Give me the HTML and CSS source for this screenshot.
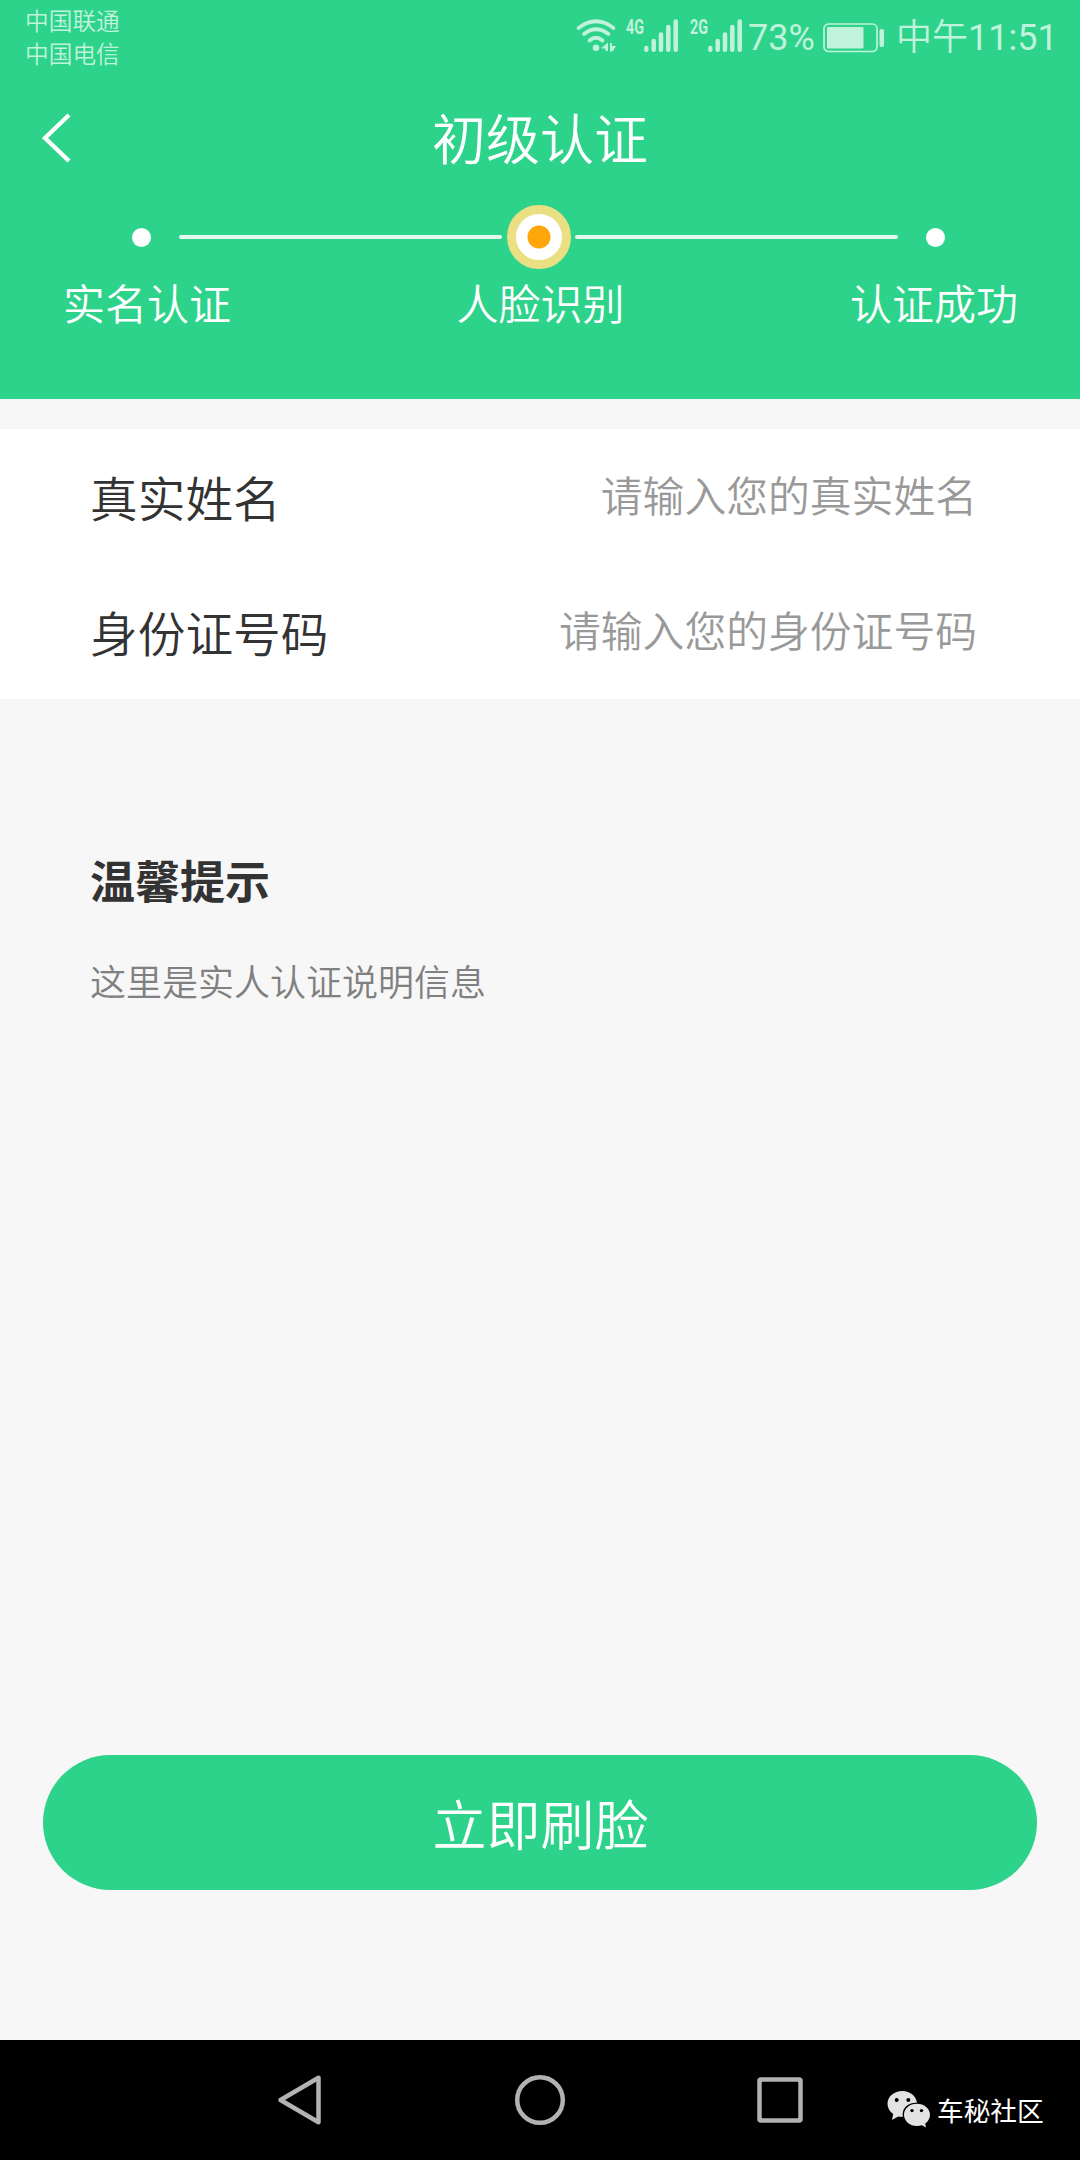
FILE: index.html
```html
<!DOCTYPE html>
<html lang="zh-CN">
<head>
<meta charset="utf-8">
<title>初级认证</title>
<link rel="stylesheet" href="styles.css">
</head>
<body>
<div class="app">
  <header class="header">
    <div class="status">
      <div class="carriers"><span>中国联通</span><span>中国电信</span></div>
      <div class="indicators">
        <svg class="signals" width="170" height="80" viewBox="575 0 170 80">
          <g fill="none" stroke="currentColor" stroke-width="3.7" stroke-linecap="round">
            <path d="M578.500 28Q596 14.500 613.500 28"/>
            <path d="M584 34Q596 24.500 608.500 34"/>
            <path d="M589.500 40.500Q596 35 602.500 40.500"/>
          </g>
          <circle cx="596" cy="47.700" r="3.300"/>
          <path d="M602 47.500L608 42.500V51H605.500V48.500H602ZM610 43H612V46H616L612.500 51.500H610Z"/>
          <g fill="none" stroke="currentColor" stroke-width="4.500" stroke-linecap="round">
            <path d="M646.300 48V49.700M653.700 41V49.700M661 34.500V49.700M668.300 27V49.700M675.700 21.500V49.700"/>
            <path d="M710.300 48V49.700M717.700 41V49.700M725 34.500V49.700M732.300 27V49.700M739.700 21.500V49.700"/>
          </g>
          <text class="net" x="626" y="34" textLength="18" lengthAdjust="spacingAndGlyphs">4G</text>
          <text class="net" x="690" y="34" textLength="18" lengthAdjust="spacingAndGlyphs">2G</text>
        </svg>
        <span class="percent">73%</span>
        <svg class="battery" width="62" height="30" viewBox="0 0 62 30">
          <rect x="1" y="1" width="53" height="27.500" rx="4.500" fill="none" stroke="currentColor" stroke-width="1.700"/>
          <rect x="4" y="4" width="36.500" height="21.500" rx="1"/>
          <rect x="56.500" y="6" width="4.500" height="18" rx="2"/>
        </svg>
        <span class="clock"><span class="period">中午</span>11:51</span>
      </div>
    </div>
    <div class="titlebar">
      <svg class="back" width="32" height="52" viewBox="0 0 32 52"><path d="M28 3L4 26L28 49" fill="none" stroke="#fff" stroke-width="4.300"/></svg>
      <h1>初级认证</h1>
    </div>
    <div class="track">
      <i class="dot"></i><i class="line"></i><i class="ring"></i><i class="line"></i><i class="dot"></i>
    </div>
    <div class="labels"><span>实名认证</span><span>人脸识别</span><span>认证成功</span></div>
  </header>
  <section class="form">
    <div class="field"><label>真实姓名</label><span class="hint">请输入您的真实姓名</span></div>
    <div class="field"><label>身份证号码</label><span class="hint">请输入您的身份证号码</span></div>
  </section>
  <section class="tips">
    <h2>温馨提示</h2>
    <p>这里是实人认证说明信息</p>
  </section>
  <div class="action"><button class="submit">立即刷脸</button></div>
  <nav class="nav">
    <svg viewBox="0 0 52 52"><path d="M44.500 3.800L6.500 26L44.500 48.200Z"/></svg>
    <svg viewBox="0 0 52 52"><circle cx="26" cy="26" r="22.800"/></svg>
    <svg viewBox="0 0 52 52"><rect x="5.500" y="5.500" width="41" height="41" rx="1.500"/></svg>
    <div class="watermark">
      <svg class="wechat" viewBox="0 0 44 37">
        <path fill="#e3e3e3" d="M15.500 0C7 0 .5 5.500.5 12.800C.5 17 2.600 20.600 6.200 23L5 29L11.200 25.400Q13.500 26 16 25.800A13 11.500 0 0 1 30 11.700C29 5 23 0 15.500 0Z"/>
        <path fill="#e3e3e3" d="M30 12.700C22.500 12.700 17 17.600 17 23.700S22.500 35 30 35Q32.500 35 35 34.300L39 36.500L38.200 32.600C41 30.600 43 27.500 43 23.700C43 17.600 37 12.700 30 12.700Z"/>
        <g fill="#000"><circle cx="9.700" cy="9" r="2"/><circle cx="21.300" cy="9" r="2"/><circle cx="25" cy="19.600" r="1.700"/><circle cx="34.500" cy="19.600" r="1.700"/></g>
      </svg>
      <span>车秘社区</span>
    </div>
  </nav>
</div>
</body>
</html>
```
FILE: styles.css
```css
* { box-sizing: border-box; }
body { margin: 0; font-family: "Noto Sans CJK SC", sans-serif; font-weight: 350; }
h1, h2, p { margin: 0; }
svg { display: block; flex: none; fill: currentColor; }
.app { width: 1080px; height: 2160px; display: flex; flex-direction: column; background: #f7f7f7; overflow: hidden; }

.header { height: 399px; background: #2dd38a; color: #fff; }
.status { height: 80px; display: flex; justify-content: space-between; color: #c0f2dc; }
.carriers { display: flex; flex-direction: column; padding: 4px 0 0 25px; font-size: 23.7px; line-height: 33px; }
.indicators { display: flex; padding-right: 26px; }
.net { font: 700 20px Roboto, sans-serif; }
.percent, .clock { font-family: Roboto, "Noto Sans CJK SC", sans-serif; font-size: 36px; line-height: 42px; font-weight: 400; padding-top: 17px; }
.percent { width: 76px; padding-left: 3px; }
.battery { margin: 23px 11px 0 2px; }
.clock { width: 158px; white-space: nowrap; }
.period { font-weight: 350; }

.titlebar { height: 116px; display: grid; grid-template-columns: 120px 1fr 120px; align-items: center; }
.back { margin-left: 41px; }
h1 { font-size: 54px; font-weight: 350; text-align: center; line-height: 80px; margin-bottom: 3px; }

.track { height: 82px; padding: 0 135px 0 132px; display: flex; align-items: center; justify-content: space-between; }
.dot { width: 19px; height: 19px; border-radius: 50%; background: #fff; }
.line { width: 323px; height: 4px; border-radius: 2px; background: #e3fbef; }
.line:nth-child(2) { margin-left: 23px; }
.line:nth-child(4) { margin-right: 23px; }
.ring { width: 64px; height: 64px; border-radius: 50%; border: 9px solid #ebdf84; background: radial-gradient(circle, #ffa60a 11px, #fff 12px); }
.labels { display: flex; justify-content: space-between; padding: 0 62px 0 63px; margin-top: -2px; font-size: 42px; line-height: 52px; }

.form { margin-top: 30px; background: #fff; }
.field { height: 135px; padding: 0 103px 0 90px; display: flex; justify-content: space-between; align-items: center; }
.field label { font-size: 47.7px; color: #333; }
.hint { font-size: 41.8px; color: #999; margin-bottom: 5px; }

.tips { flex: 1; padding: 148px 90px 0; }
h2 { font-size: 45px; line-height: 66px; color: #333; font-weight: 700; }
.tips p { margin-top: 40px; font-size: 36px; line-height: 54px; color: #808080; }

.action { padding: 0 43px 150px; }
.submit { display: block; width: 100%; height: 135px; border: 0; padding: 0 0 0 1px; border-radius: 68px; background: #2dd38a; color: #fff; font: inherit; font-size: 54px; }

.nav { position: relative; height: 120px; background: #000; display: flex; justify-content: center; align-items: center; gap: 188px; }
.nav > svg { width: 52px; height: 52px; fill: none; stroke: #b2b2b2; stroke-width: 4.5px; stroke-linejoin: round; }
.watermark { position: absolute; left: 887px; top: 50px; display: flex; gap: 6px; color: #fff; font-size: 26.7px; line-height: 40px; font-weight: 400; white-space: nowrap; }
.wechat { width: 44px; height: 37px; margin-top: 1px; }
```
